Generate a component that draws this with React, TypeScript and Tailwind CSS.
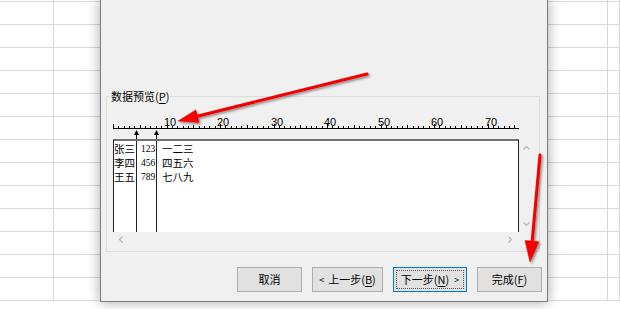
import React from "react";

const CJK = "font-['Noto_Sans_CJK_SC','Liberation_Sans',sans-serif]";

const rows = [
  ["张三", "123", "一二三"],
  ["李四", "456", "四五六"],
  ["王五", "789", "七八九"],
];

function Ruler() {
  const step = 5.35;
  const ticks = Array.from({ length: 77 }, (_, i) => i);
  return (
    <svg width={406} height={23} className="block">
      <rect x={0} y={12} width={406} height={1} fill="#000" />
      {ticks.map((i) => {
        const x = Math.round(i * step);
        const h = i % 10 === 0 ? 4 : i % 5 === 0 ? 3 : 2;
        return <rect key={i} x={x} y={12 - h} width={1} height={h} fill="#000" />;
      })}
      {[10, 20, 30, 40, 50, 60, 70].map((n) => (
        <text
          key={n}
          x={Math.round(n * step) - 3}
          y={10}
          fontSize={11}
          fontFamily="Liberation Sans, sans-serif"
          fill="#000"
        >
          {n}
        </text>
      ))}
      {[23, 43].map((x) => (
        <g key={x}>
          <rect x={x} y={16} width={1} height={7} fill="#000" />
          <polygon points={`${x + 0.5},14 ${x - 2},19 ${x + 3},19`} fill="#000" />
        </g>
      ))}
    </svg>
  );
}

function Chevron({ dir }: { dir: "up" | "down" | "left" | "right" }) {
  const pts = {
    up: "0.5,4.5 3.5,1.5 6.5,4.5",
    down: "0.5,1.5 3.5,4.5 6.5,1.5",
    left: "4.5,0.5 1.5,3.5 4.5,6.5",
    right: "1.5,0.5 4.5,3.5 1.5,6.5",
  }[dir];
  const vertical = dir === "up" || dir === "down";
  return (
    <svg width={vertical ? 7 : 6} height={vertical ? 6 : 7} className="block">
      <polyline points={pts} fill="none" stroke="#b5b5b5" strokeWidth={1.2} />
    </svg>
  );
}

function Key({ k }: { k: string }) {
  return (
    <>
      (<span className="underline underline-offset-2">{k}</span>)
    </>
  );
}

function Button({
  width,
  focused,
  children,
}: {
  width: string;
  focused?: boolean;
  children: React.ReactNode;
}) {
  return (
    <div
      className={`${width} flex h-[25px] items-center justify-center bg-[#e1e1e1] text-[11px] text-black ${CJK} ${
        focused ? "border border-[#0078d7] p-[2px]" : "border border-[#adadad]"
      }`}
    >
      {focused ? (
        <div className="flex h-full w-full items-center justify-center border border-dotted border-[#555]">
          {children}
        </div>
      ) : (
        children
      )}
    </div>
  );
}

function Dialog() {
  return (
    <div className="absolute left-[100px] top-[-1px] flex h-[303px] w-[448px] flex-col border border-[#7a7a7a] bg-[#f0f0f0] shadow-[0_0_12px_rgba(0,0,0,0.35)]">
      {/* 数据预览 group */}
      <div className="relative ml-[5px] mt-[96px] h-[156px] w-[434px] border border-[#dcdcdc] pl-[6px] pt-[19px]">
        <div
          className={`absolute left-[3px] top-[-8px] bg-[#f0f0f0] px-[1px] text-[11px] leading-[14px] text-black ${CJK}`}
        >
          数据预览<Key k="P" />
        </div>
        <Ruler />
        <div className="flex">
          <div className="flex h-[93px] w-[406px] border-l border-r border-t-2 border-l-[#222] border-r-[#222] border-t-[#707070] bg-white">
            <div className={`w-[22px] pt-px text-[10.5px] leading-[14px] ${CJK}`}>
              {rows.map((r) => (
                <div key={r[0]} className="whitespace-nowrap">{r[0]}</div>
              ))}
            </div>
            <div className="w-[20px] border-l border-[#222] pl-[4px] pt-px font-['Liberation_Serif',serif] text-[9.5px] leading-[14px]">
              {rows.map((r) => (
                <div key={r[1]}>{r[1]}</div>
              ))}
            </div>
            <div className={`flex-1 border-l border-[#222] pl-[5px] pt-px text-[10.5px] leading-[14px] ${CJK}`}>
              {rows.map((r) => (
                <div key={r[2]}>{r[2]}</div>
              ))}
            </div>
          </div>
          <div className="flex h-[93px] w-[14px] flex-col items-center justify-between pb-[5px] pt-[6px]">
            <Chevron dir="up" />
            <Chevron dir="down" />
          </div>
        </div>
        <div className="flex h-[14px] w-[406px] items-center justify-between pl-[5px] pr-[6px]">
          <Chevron dir="left" />
          <Chevron dir="right" />
        </div>
      </div>

      {/* buttons */}
      <div className="mt-[15px] flex justify-end gap-[10px] pr-[5px]">
        <Button width="w-[65px]">取消</Button>
        <Button width="w-[71px]">
          <span className="mr-[4px] text-[9px]">&lt;</span>上一步<Key k="B" />
        </Button>
        <Button width="w-[74px]" focused>
          下一步<Key k="N" />
          <span className="ml-[5px] text-[9px]">&gt;</span>
        </Button>
        <Button width="w-[65px]">
          完成<Key k="F" />
        </Button>
      </div>
    </div>
  );
}

function Arrows() {
  return (
    <svg width={620} height={309} className="pointer-events-none absolute left-0 top-0">
      <defs>
        <filter id="sh" x="-20%" y="-20%" width="140%" height="140%">
          <feDropShadow dx="1.5" dy="1.5" stdDeviation="1" floodColor="#000" floodOpacity="0.45" />
        </filter>
      </defs>
      <g filter="url(#sh)" fill="#f40000" stroke="#f40000">
        <line x1={367} y1={74} x2={196} y2={116.5} strokeWidth={3} strokeLinecap="round" />
        <polygon points="178,121 199,122.5 195.8,109.9" strokeWidth={0.5} />
        <line x1={540} y1={155} x2={532} y2={243} strokeWidth={3} strokeLinecap="round" />
        <polygon points="530,262 538.9,241.7 525,240.4" strokeWidth={0.5} />
      </g>
    </svg>
  );
}

export default function App() {
  const cells = Array.from({ length: 14 * 8 }, (_, i) => i);
  return (
    <div className="relative h-[309px] w-[620px] overflow-hidden bg-white">
      <div className="grid grid-cols-[54px_93px_91px_93px_92px_93px_92px_1fr] grid-rows-[2px_repeat(13,23px)]">
        {cells.map((i) => (
          <div key={i} className="border-b border-r border-[#d9d9d9]" />
        ))}
      </div>
      <Dialog />
      <Arrows />
    </div>
  );
}
